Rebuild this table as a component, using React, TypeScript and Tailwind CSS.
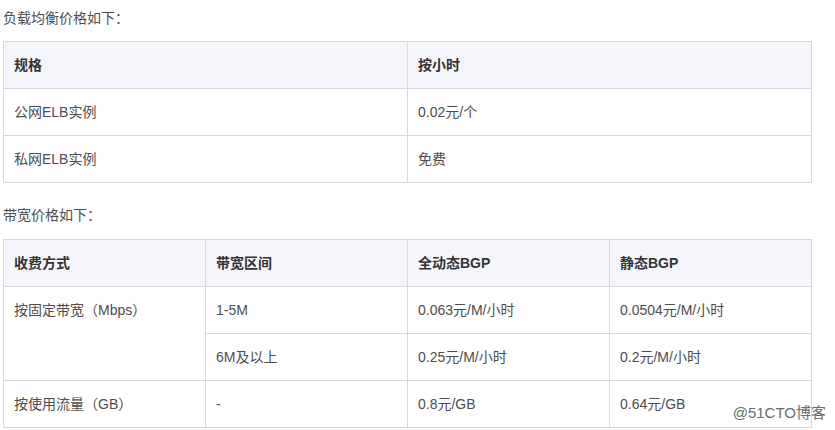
import React from "react";

const elbRows = [
  ["公网ELB实例", "0.02元/个"],
  ["私网ELB实例", "免费"],
];

const cell = "border border-[#d7d8e2] px-[10px] py-[14px] leading-[18px] align-top text-left";
const head = `${cell} font-bold text-[#333]`;

function App() {
  return (
    <div
      className="relative w-[835px] h-[430px] overflow-hidden bg-white pl-[3px] pt-[8px] text-[14px] text-[#4d4d4d]"
      style={{ fontFamily: '"Liberation Sans", "Noto Sans CJK SC", sans-serif' }}
    >
      <p className="leading-[20px]">负载均衡价格如下：</p>

      <table className="mt-[13px] w-[809px] table-fixed border-collapse">
        <thead>
          <tr className="bg-[#f5f6fb]">
            <th className={head}>规格</th>
            <th className={head}>按小时</th>
          </tr>
        </thead>
        <tbody>
          {elbRows.map((row, i) => (
            <tr key={i}>
              <td className={cell}>{row[0]}</td>
              <td className={cell}>{row[1]}</td>
            </tr>
          ))}
        </tbody>
      </table>

      <p className="mt-[22px] leading-[20px]">带宽价格如下：</p>

      <table className="mt-[14px] w-[809px] table-fixed border-collapse">
        <thead>
          <tr className="bg-[#f5f6fb]">
            <th className={head}>收费方式</th>
            <th className={head}>带宽区间</th>
            <th className={head}>全动态BGP</th>
            <th className={head}>静态BGP</th>
          </tr>
        </thead>
        <tbody>
          <tr>
            <td className={cell} rowSpan={2}>
              按固定带宽（Mbps）
            </td>
            <td className={cell}>1-5M</td>
            <td className={cell}>0.063元/M/小时</td>
            <td className={cell}>0.0504元/M/小时</td>
          </tr>
          <tr>
            <td className={cell}>6M及以上</td>
            <td className={cell}>0.25元/M/小时</td>
            <td className={cell}>0.2元/M/小时</td>
          </tr>
          <tr>
            <td className={cell}>按使用流量（GB）</td>
            <td className={cell}>-</td>
            <td className={cell}>0.8元/GB</td>
            <td className={cell}>0.64元/GB</td>
          </tr>
        </tbody>
      </table>

      <span className="absolute right-[9px] top-[403px] text-[15px] leading-[20px] text-[#6b6b6b] [text-shadow:0_0_2px_#fff,0_0_2px_#fff]">
        @51CTO博客
      </span>
    </div>
  );
}

export default App;
